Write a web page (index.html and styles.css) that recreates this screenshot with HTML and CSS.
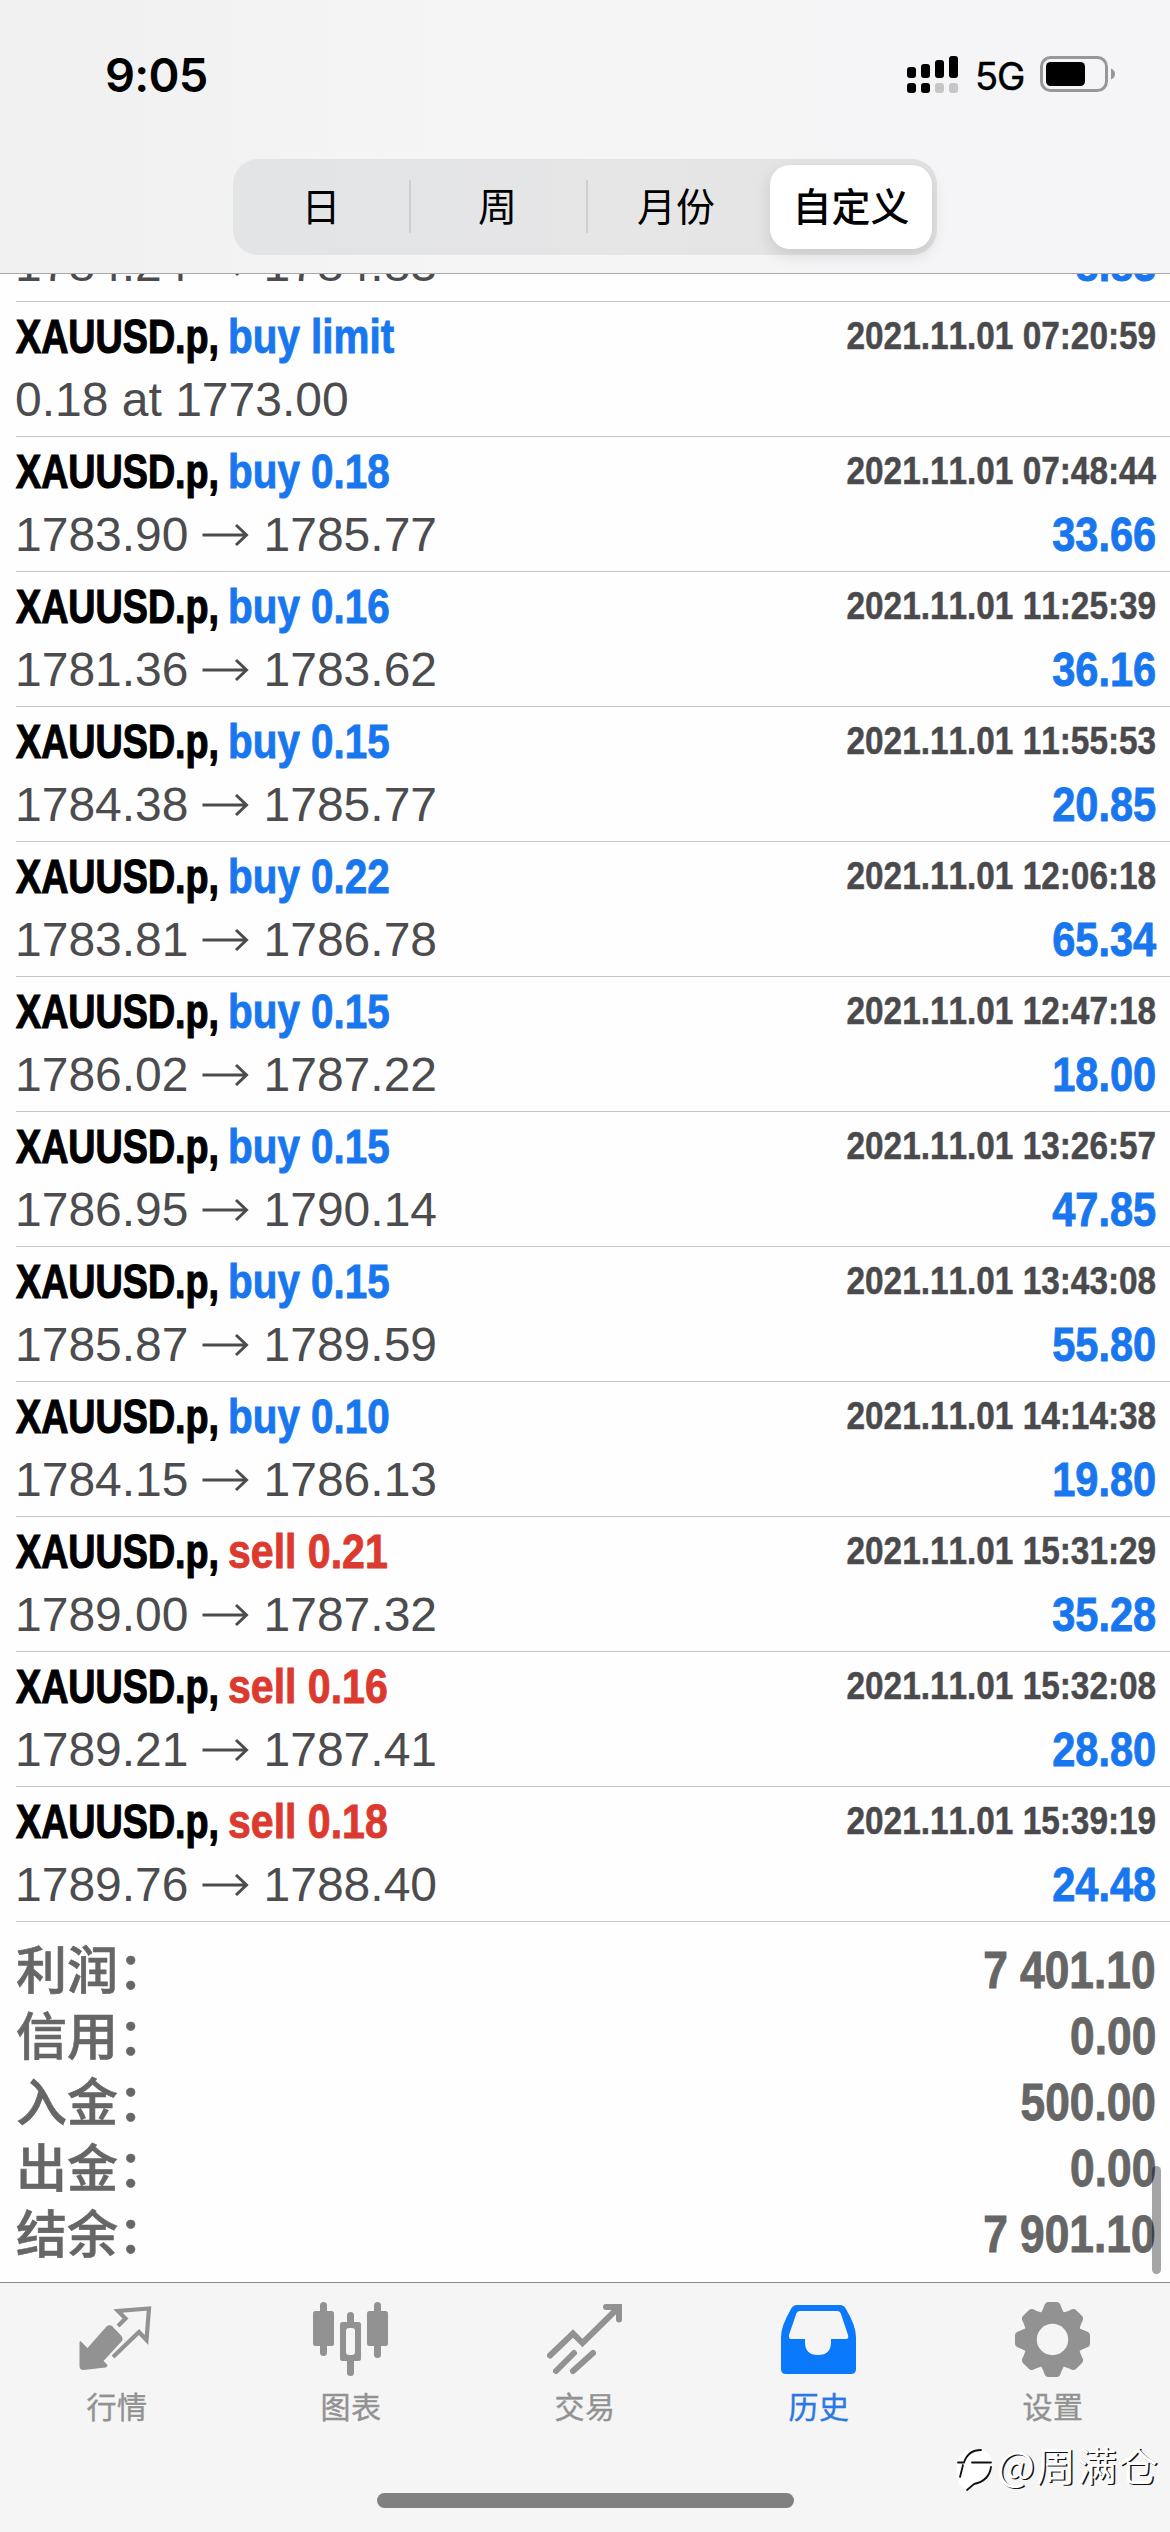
FILE: index.html
```html
<!DOCTYPE html>
<html lang="zh-CN">
<head>
<meta charset="utf-8">
<title>历史</title>
<link rel="stylesheet" href="styles.css">
</head>
<body>
<div class="screen">
  <header class="top">
    <div class="status">
      <span class="time">9:05</span>
      <div class="status-right">
        <svg class="signal" width="52" height="38" viewBox="0 0 52 38">
          <rect x="0" y="11" width="9" height="11" rx="3"/>
          <rect x="14" y="8" width="9" height="14" rx="3"/>
          <rect x="28" y="4" width="9" height="18" rx="3"/>
          <rect x="42" y="0" width="9" height="22" rx="3"/>
          <rect x="0" y="27" width="9" height="10" rx="3"/>
          <rect x="14" y="27" width="9" height="10" rx="3"/>
          <rect x="28" y="27" width="9" height="10" rx="3" fill="#c6c6c7"/>
          <rect x="42" y="27" width="9" height="10" rx="3" fill="#c6c6c7"/>
        </svg>
        <span class="net">5G</span>
        <svg class="battery" width="76" height="36" viewBox="0 0 76 36">
          <rect x="1.5" y="1.5" width="65" height="33" rx="9" fill="none" stroke="#97979a" stroke-width="3"/>
          <rect x="6" y="6" width="39" height="24" rx="4.5"/>
          <path d="M71 12.5Q75 14 75 18Q75 22 71 23.5Z" fill="#97979a"/>
        </svg>
      </div>
    </div>
    <nav class="segments">
      <span class="seg">日</span>
      <span class="seg divided">周</span>
      <span class="seg divided">月份</span>
      <span class="seg selected">自定义</span>
    </nav>
  </header>
  <main class="list" id="list"></main>
  <section class="summary">
    <div class="sum"><span class="label">利润：</span><b>7 401.10</b></div>
    <div class="sum"><span class="label">信用：</span><b>0.00</b></div>
    <div class="sum"><span class="label">入金：</span><b>500.00</b></div>
    <div class="sum"><span class="label">出金：</span><b>0.00</b></div>
    <div class="sum"><span class="label">结余：</span><b>7 901.10</b></div>
    <div class="scrollbar"></div>
  </section>
  <footer class="tabs">
    <div class="tab">
      <svg width="76" height="76" viewBox="0 0 76 76">
        <path d="M1 33L8 40L27 18.500Q30 16 33 18.500L42 28Q44 31 42 33.500L24 53L28 57Q28 59 26 59.500L4 62Q0 62 0 58V34Z" transform="translate(.5 6)" fill="#929292"/>
        <path d="M39 22L46.500 14.500L39 7L70 4.500L67.500 36L60 28L34 53" transform="translate(0 2)" fill="none" stroke="#929292" stroke-width="4.200"/>
      </svg>
      <span>行情</span>
    </div>
    <div class="tab">
      <svg width="76" height="76" viewBox="0 0 76 76" fill="#929292">
        <rect x="7" y="0" width="7" height="54" rx="3.500"/><rect x="0" y="9" width="21" height="35" rx="2.500"/>
        <rect x="61" y="0" width="7" height="56" rx="3.500"/><rect x="54" y="9" width="21" height="35" rx="2.500"/>
        <rect x="34" y="10" width="7" height="64" rx="3.500"/><rect x="27" y="20" width="21" height="39" rx="2.500"/>
        <rect x="33" y="26" width="9" height="27" rx="3" fill="#f5f5f5"/>
      </svg>
      <span>图表</span>
    </div>
    <div class="tab">
      <svg width="76" height="76" viewBox="0 0 76 76" fill="none" stroke="#929292" stroke-width="6" stroke-linecap="round">
        <path d="M3 53.500L26 31.500L35.500 41L70 7"/>
        <path d="M59 5H72V17.500"/>
        <path d="M9 69L27 51M26 69L46 51"/>
      </svg>
      <span>交易</span>
    </div>
    <div class="tab active">
      <svg width="76" height="76" viewBox="0 0 76 76">
        <path fill-rule="evenodd" fill="#0b79fb" d="M16 3H59Q63 3 65 7Q75 24 75 35V67Q75 72 70 72H5Q0 72 0 67V35Q0 24 10 7Q12 3 16 3ZM19 9Q16.500 9 15.500 11L8 33Q7.500 37 10 37H24V40Q24 53 37 53Q50 53 50 40V37H65Q68 37 67 33L60 12Q59 9 56 9Z"/>
      </svg>
      <span>历史</span>
    </div>
    <div class="tab">
      <svg width="76" height="76" viewBox="0 0 76 76">
        <g fill="#929292" transform="translate(37.500 37.500)">
          <path id="tooth" d="M-14 -22Q-10 -29 -8.500 -33Q-7.500 -37.500 -4 -37.500H4Q7.500 -37.500 8.500 -33Q10 -29 14 -22Z"/>
          <use href="#tooth" transform="rotate(45)"/><use href="#tooth" transform="rotate(90)"/><use href="#tooth" transform="rotate(135)"/>
          <use href="#tooth" transform="rotate(180)"/><use href="#tooth" transform="rotate(225)"/><use href="#tooth" transform="rotate(270)"/><use href="#tooth" transform="rotate(315)"/>
          <circle r="28.500"/>
          <circle r="15.700" fill="#f5f5f5"/>
        </g>
      </svg>
      <span>设置</span>
    </div>
    <div class="home"></div>
    <div class="watermark">
      <svg width="42" height="50" viewBox="0 0 42 50" fill="none" stroke-linecap="round">
        <path d="M6 38Q-2 8 18 6Q35 5 35 20Q35 36 12 44Z" fill="#fff" stroke="#fff" stroke-width="4"/>
        <path d="M3 17.500H9Q13 5 26 5M17 17.500H36M8 20L5 32M36 22Q34 36 19 39L12 45" stroke="#111" stroke-width="1.800"/>
      </svg>
      <span>@周满仓</span>
    </div>
  </footer>
</div>
<script src="app.js"></script>
</body>
</html>
```
FILE: styles.css
```css
* { box-sizing: border-box; }
body { margin: 0; background: #fff; font-family: "Liberation Sans", "Noto Sans CJK SC", sans-serif; font-kerning: none; }
.screen { width: 1170px; height: 2532px; display: flex; flex-direction: column; overflow: hidden; background: #fefefe; }

.top { height: 274px; flex: none; background: linear-gradient(90deg, #f0f0f1, #f5f5f6 40%, #f5f5f7); border-bottom: 1px solid #a9a9ab; position: relative; z-index: 1; }
.status { height: 159px; padding: 51px 54px 0 105px; display: flex; justify-content: space-between; align-items: flex-start; }
.time { font: 600 47px/47px Inter, sans-serif; letter-spacing: -.8px; }
.status-right { display: flex; align-items: flex-start; padding-top: 5px; }
.net { font: 400 38px/38px Inter, sans-serif; width: 46px; margin: 1px 19px 0 16px; letter-spacing: -1px; -webkit-text-stroke: .5px; }
.segments { width: 704px; height: 96px; margin-left: 233px; padding: 6px 5px 6px 0; display: flex; border-radius: 25px; background: linear-gradient(90deg, #e3e4e6, #e6e6e7 60%, #e2e2e3); font: 400 39px/1 "Noto Sans CJK SC", sans-serif; }
.seg { width: 176px; padding-bottom: 5px; display: flex; align-items: center; justify-content: center; position: relative; }
.seg.divided { width: 177px; }
.seg.divided::before { content: ""; position: absolute; left: 0; top: 15px; width: 2px; height: 53px; background: #cfcfd1; }
.seg.divided + .divided { width: 184px; padding-right: 4px; }
.seg.selected { width: 162px; border-radius: 20px; background: #fff; font-weight: 500; box-shadow: 0 6px 16px rgba(0,0,0,.12); }

.list { flex: none; height: 1648px; display: flex; flex-direction: column; justify-content: flex-end; overflow: hidden; }
.row { height: 135px; flex: none; margin-left: 16px; padding: 7px 14px 0 0; border-bottom: 1px solid #c4c4c6; }
.line { display: flex; height: 55px; line-height: 55px; font-size: 48px; font-weight: 700; white-space: nowrap; }
.line + .line { height: 64px; line-height: 64px; margin-top: 4px; align-items: center; }
.symbol { width: 212px; }
.symbol span, .side span, .date, .profit, .sum b { display: inline-block; transform-origin: left; -webkit-text-stroke: .9px; }
.symbol span { transform: scaleX(.785); -webkit-text-stroke: 1.2px; }
.side span { transform: scaleX(.842); color: #1877ee; }
.side.sell span { transform: scaleX(.855); color: #dc3a2e; }
.date, .profit, .sum b { margin-left: auto; transform-origin: right; }
.date { font-size: 39px; line-height: 54px; color: #4a4a4d; transform: scaleX(.855); -webkit-text-stroke: .5px; }
.profit { color: #1877ee; transform: scaleX(.865); }
.price { font-weight: 400; color: #4c4c4e; }
.price:first-child { margin-left: -1px; margin-right: 1px; }
.arrow { width: 74px; height: 30px; fill: none; stroke: #4c4c4e; stroke-width: 3; }

.summary { height: 360px; flex: none; padding: 15px 14px 0 16px; position: relative; color: #666; }
.sum { height: 66px; display: flex; align-items: center; font-size: 51px; line-height: 66px; white-space: nowrap; }
.label { font-family: "Noto Sans CJK SC", sans-serif; font-weight: 500; padding-bottom: 6px; -webkit-text-stroke: .6px; }
.sum b { transform: scaleX(.868); margin-top: 2px; }
.scrollbar { position: absolute; right: 9px; top: 244px; width: 9px; height: 108px; border-radius: 5px; background: rgba(0,0,0,.35); }

.tabs { flex: 1; display: flex; border-top: 1px solid #8b8b8b; background: #f5f5f5; position: relative; }
.tab { width: 234px; padding-top: 19px; display: flex; flex-direction: column; align-items: center; color: #929292; font: 400 30px/40px "Noto Sans CJK SC", sans-serif; letter-spacing: .5px; }
.tab span { margin-top: 7px; -webkit-text-stroke: .4px; }
.active { color: #2a78e4; }
.home { position: absolute; left: 377px; top: 210px; width: 417px; height: 15px; border-radius: 8px; background: #808080; }
.watermark { position: absolute; left: 955px; top: 162px; display: flex; align-items: center; font: 400 40px/48px "Noto Sans CJK SC", sans-serif; color: #fff; text-shadow: 1.5px 1px 0 #111; letter-spacing: 1px; }
.watermark span { margin-top: -12px; }
```
FILE: app.js
```javascript
const rows = [
  ["buy 0.15", "2021.11.01 06:48:10", "1784.24", "1784.83", "8.83"],
  ["buy limit", "2021.11.01 07:20:59", "0.18 at 1773.00"],
  ["buy 0.18", "2021.11.01 07:48:44", "1783.90", "1785.77", "33.66"],
  ["buy 0.16", "2021.11.01 11:25:39", "1781.36", "1783.62", "36.16"],
  ["buy 0.15", "2021.11.01 11:55:53", "1784.38", "1785.77", "20.85"],
  ["buy 0.22", "2021.11.01 12:06:18", "1783.81", "1786.78", "65.34"],
  ["buy 0.15", "2021.11.01 12:47:18", "1786.02", "1787.22", "18.00"],
  ["buy 0.15", "2021.11.01 13:26:57", "1786.95", "1790.14", "47.85"],
  ["buy 0.15", "2021.11.01 13:43:08", "1785.87", "1789.59", "55.80"],
  ["buy 0.10", "2021.11.01 14:14:38", "1784.15", "1786.13", "19.80"],
  ["sell 0.21", "2021.11.01 15:31:29", "1789.00", "1787.32", "35.28"],
  ["sell 0.16", "2021.11.01 15:32:08", "1789.21", "1787.41", "28.80"],
  ["sell 0.18", "2021.11.01 15:39:19", "1789.76", "1788.40", "24.48"]
];
const arrow = '<svg class="arrow" viewBox="0 0 74 30"><path d="M12.500 15H56M46 5L56.500 15L46 25"/></svg>';
document.getElementById("list").innerHTML = rows.map(([side, date, from, to, profit]) => `
  <article class="row">
    <div class="line">
      <span class="symbol"><span>XAUUSD.p,</span></span>
      <span class="side ${side.split(" ")[0]}"><span>${side}</span></span>
      <span class="date">${date}</span>
    </div>
    <div class="line">
      <span class="price">${from}</span>${to ? arrow + `<span class="price">${to}</span><span class="profit">${profit}</span>` : ""}
    </div>
  </article>`).join("");
```
